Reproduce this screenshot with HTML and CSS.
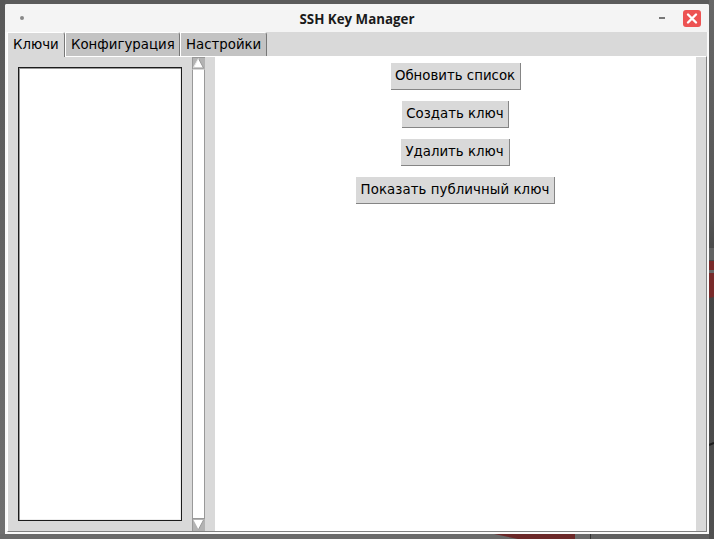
FILE: index.html
```
<!DOCTYPE html>
<html lang="ru">
<head>
<meta charset="utf-8">
<title>SSH Key Manager</title>
<link rel="stylesheet" href="styles.css">
</head>
<body>
<svg class="wallpaper" width="714" height="539" aria-hidden="true">
  <defs>
    <linearGradient id="side" x1="0" y1="0" x2="0" y2="1">
      <stop offset="0" stop-color="#676767"/><stop offset=".4" stop-color="#555"/><stop offset=".5" stop-color="#444"/><stop offset="1" stop-color="#505050"/>
    </linearGradient>
    <linearGradient id="left" x1="0" y1="0" x2="0" y2="1">
      <stop offset="0" stop-color="#585858"/><stop offset="1" stop-color="#707070"/>
    </linearGradient>
  </defs>
  <rect width="714" height="539" fill="#5b5b5b"/>
  <rect width="5" height="539" fill="url(#left)"/>
  <rect x="709" width="5" height="539" fill="url(#side)"/>
  <rect x="709" y="248" width="5" height="12" fill="#626262"/>
  <path d="M709 261h5v36l-5 1z" fill="#782a2a"/>
  <path d="M709 270h5v3h-5z" fill="#686868"/>
  <path d="M709 445l5-2" stroke="#1d1d1d" stroke-width="2"/>
  <rect y="534" width="590" height="5" fill="#6a6a6a"/>
  <rect x="590" y="534" width="119" height="5" fill="#606060"/>
  <path d="M494 534h81v5h-57z" fill="#6b2828"/>
  <path d="M590.500 534v5" stroke="#333"/>
</svg>
<main class="window">
  <header class="titlebar">
    <span class="dot"></span>
    <h1 class="title">SSH Key Manager</h1>
    <span class="minimize"></span>
    <svg class="close" width="18" height="17" viewBox="0 0 18 17"><rect width="18" height="17" rx="3" fill="#ed5353"/><path d="M5 4.500l8 8M13 4.500l-8 8" stroke="#fff" stroke-width="2.400" stroke-linecap="round"/></svg>
  </header>
  <nav class="tabs">
    <span class="tab tab-keys active">Ключи</span>
    <span class="tab tab-config">Конфигурация</span>
    <span class="tab tab-settings">Настройки</span>
  </nav>
  <section class="pane">
    <div class="listbox"></div>
    <div class="scrollbar">
      <svg width="13" height="12" viewBox="0 0 13 12"><path d="M0 0h13v12H0z" fill="#b3b3b3"/><path d="M0 .5h13M.5 0v12" stroke="#999"/><path d="M6.500 1.500L11.500 11H1.500z" fill="#fff"/><path d="M6.500 1.500L11.500 11H1.500" fill="none" stroke="#999"/><path d="M6.500 1.500L1.500 10.500" stroke="#eee"/></svg>
      <div class="thumb"></div>
      <svg width="13" height="12" viewBox="0 0 13 12"><path d="M0 0h13v12H0z" fill="#b3b3b3"/><path d="M.5 0v12" stroke="#999"/><path d="M1.500 1h10L6.500 10.500z" fill="#fff"/><path d="M11.500 1L6.500 10.500" stroke="#999"/></svg>
    </div>
    <div class="actions">
      <button class="btn refresh">Обновить список</button>
      <button class="btn create">Создать ключ</button>
      <button class="btn delete">Удалить ключ</button>
      <button class="btn show">Показать публичный ключ</button>
    </div>
  </section>
</main>
</body>
</html>
```
FILE: styles.css
```
* { box-sizing: border-box; }
body {
  margin: 0;
  width: 714px;
  height: 539px;
  padding: 4px 5px 5px;
  overflow: hidden;
  font: 13.333px/16px "DejaVu Sans", sans-serif;
  color: #000;
}
.wallpaper { position: absolute; inset: 0; z-index: -1; }
.window {
  width: 704px;
  height: 530px;
  display: flex;
  flex-direction: column;
  padding: 0 2px 2px;
  background: #f9f9f9;
  border-radius: 2px 2px 0 0;
}
.titlebar {
  display: flex;
  align-items: center;
  height: 28px;
  margin: 0 -2px;
  background: #f4f4f4;
  border-radius: 2px 2px 0 0;
}
.dot { width: 4px; height: 4px; margin-left: 15px; border-radius: 50%; background: #888; }
.title {
  flex: 1;
  margin: 2px 0 0 31px;
  text-align: center;
  font: bold 13.333px/20px "Open Sans", "Noto Sans", sans-serif;
  color: #1a1a1a;
}
.minimize { width: 6px; height: 2px; background: #777; }
.close { margin: 0 8px 0 18px; }
.tabs { display: flex; height: 24px; background: #d9d9d9; border-left: 1px solid #fff; }
.tab {
  height: 24px;
  padding: 4px 0 0 5px;
  border: solid #fff;
  border-width: 1px 0 0 1px;
  border-right: 1px solid #777;
  border-top-right-radius: 3px;
  background: #c3c3c3;
  white-space: nowrap;
}
.tab-keys { width: 57px; border-left: 0; }
.tab-config { width: 115px; }
.tab-settings { width: 87px; }
.active { background: #d9d9d9; height: 25px; z-index: 1; }
.pane {
  flex: 1;
  display: flex;
  background: #d9d9d9;
  border: 1px solid #808080;
  border-top-color: #fff;
  border-left-color: #fff;
}
.listbox {
  width: 164px;
  height: 454px;
  margin: 10px 10px 0;
  background: #fff;
  border: 1px solid #1c1c1c;
  box-shadow: inset 1px 1px #999, inset -1px -1px #eee;
}
.scrollbar { display: flex; flex-direction: column; width: 13px; }
.scrollbar svg { display: block; flex: none; }
.thumb {
  flex: 1;
  background: #fff;
  border: 1px solid #999;
  border-top-color: #d9d9d9;
}
.actions {
  display: flex;
  flex-direction: column;
  align-items: center;
  gap: 11px;
  width: 481px;
  margin-left: 10px;
  padding-top: 6px;
  background: #fff;
}
.btn {
  height: 27px;
  margin: 0;
  padding: 0 0 1px;
  border: solid #858585;
  border-width: 0 1px 1px 0;
  background: #d9d9d9;
  color: #000;
  font: inherit;
  white-space: nowrap;
}
.refresh { width: 130px; }
.create { width: 107px; }
.delete { width: 109px; padding-right: 1px; }
.show { width: 199px; letter-spacing: .07px; }
```
